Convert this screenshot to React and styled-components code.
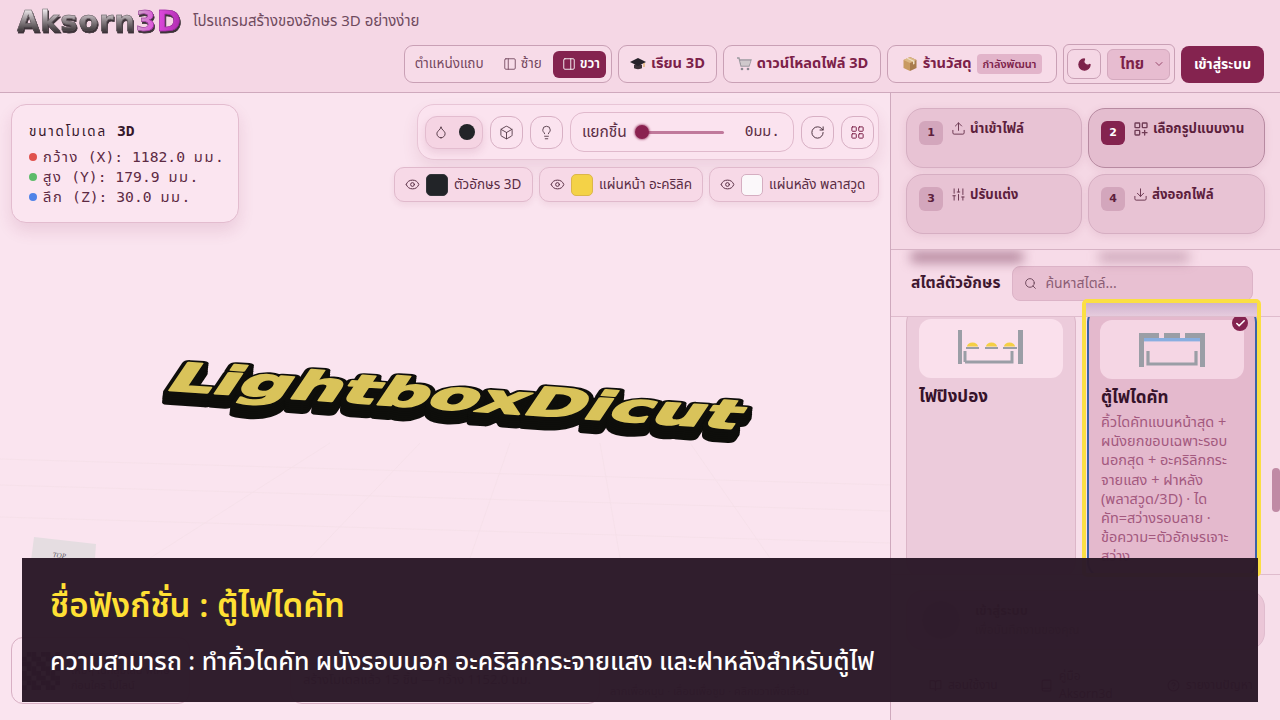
import React from 'react';
import styled, { createGlobalStyle } from 'styled-components';
import {
  PanelLeft, PanelRight, Droplet, Box, Lightbulb, RotateCw, LayoutGrid, Eye,
  Upload, SlidersVertical, Download, Search, Moon, ChevronDown, Check, BookOpen, Book, CircleHelp,
} from 'lucide-react';

const SANS = `"Noto Sans Thai", Kanit, Prompt, "Noto Sans", sans-serif`;
const MONO = `"DejaVu Sans Mono", "Noto Sans Thai", monospace`;
const WINE = '#84234f';
const INK = '#7c2149';
const LINE = '#c9a0b5';

const Global = createGlobalStyle`
  html, body { margin: 0; padding: 0; height: 100%; overflow: hidden; }
  body { font-family: ${SANS}; background: #fae4ef; color: #3a1a2b; }
  * { box-sizing: border-box; }
`;

const Page = styled.div`
  width: 1280px;
  height: 720px;
  display: flex;
  flex-direction: column;
  position: relative;
  overflow: hidden;
`;

/* ---------- header ---------- */
const Header = styled.header`
  height: 93px;
  flex: none;
  background: #f5d7e5;
  border-bottom: 1px solid #cfa9bd;
  padding: 8px 16px 0 17px;
  display: flex;
  flex-direction: column;
  gap: 9px;
`;
const Brand = styled.div`
  display: flex;
  align-items: center;
  gap: 12px;
  height: 27px;
`;
const Logo = styled.div`
  font-family: "DejaVu Sans", sans-serif;
  font-weight: 700;
  font-size: 29px;
  line-height: 27px;
  letter-spacing: 0.8px;
  width: 164px;
  white-space: nowrap;
  filter: drop-shadow(1px 2px 0 #3c3238);
`;
const LogoPart = styled.span`
  background: ${(p) => p.$bg};
  -webkit-background-clip: text;
  background-clip: text;
  color: transparent;
  -webkit-text-stroke: 0.5px ${(p) => p.$edge};
`;
const Tagline = styled.span`
  font-size: 15px;
  color: #6f4a5e;
`;
const Controls = styled.div`
  display: flex;
  justify-content: flex-end;
  align-items: center;
  gap: 6px;
`;
const Group = styled.div`
  height: 38px;
  display: flex;
  align-items: center;
  border: 1px solid ${LINE};
  border-radius: 9px;
  padding: 0 5px 0 10px;
  background: #f7dbe8;
`;
const GroupLabel = styled.span`
  font-size: 13.5px;
  color: #75485f;
  margin-right: 19px;
`;
const SideButton = styled.div`
  height: 27px;
  display: flex;
  align-items: center;
  gap: 4px;
  padding: 0 6px 0 ${(p) => (p.$active ? 9 : 0)}px;
  margin-left: ${(p) => (p.$active ? 5 : 0)}px;
  border-radius: 6px;
  font-size: 13.5px;
  font-weight: ${(p) => (p.$active ? 600 : 400)};
  color: ${(p) => (p.$active ? '#fff' : '#75485f')};
  background: ${(p) => (p.$active ? WINE : 'transparent')};
`;
const NavButton = styled.div`
  height: 38px;
  display: flex;
  align-items: center;
  gap: 5px;
  width: ${(p) => p.$w}px;
  justify-content: center;
  border: 1px solid ${LINE};
  border-radius: 9px;
  background: #f7dbe8;
  font-size: 14.6px;
  font-weight: 700;
  color: ${INK};
  white-space: nowrap;
`;
const SoonTag = styled.span`
  height: 20px;
  padding: 0 6px;
  display: flex;
  align-items: center;
  border-radius: 4px;
  background: #e2b4ca;
  font-size: 11px;
  font-weight: 600;
  color: ${INK};
`;
const ThemeGroup = styled.div`
  width: 112px;
  height: 40px;
  display: flex;
  align-items: center;
  gap: 6px;
  padding: 0 3px;
  border: 1px solid ${LINE};
  border-radius: 6px;
`;
const MoonButton = styled.div`
  width: 34px;
  height: 30px;
  display: flex;
  align-items: center;
  justify-content: center;
  border: 1px solid ${LINE};
  border-radius: 7px;
  color: ${INK};
`;
const LangSelect = styled.div`
  width: 63px;
  height: 31px;
  display: flex;
  align-items: center;
  justify-content: space-between;
  padding: 0 4px 0 12px;
  border: 1px solid #d4a9be;
  border-radius: 6px;
  background: #e7bcd0;
  font-size: 15px;
  font-weight: 700;
  color: ${INK};
`;
const LoginButton = styled.div`
  width: 83px;
  height: 37px;
  display: flex;
  align-items: center;
  justify-content: center;
  border-radius: 8px;
  background: ${WINE};
  color: #fff;
  font-size: 14px;
  font-weight: 700;
`;

/* ---------- main ---------- */
const Main = styled.main`
  flex: 1;
  display: flex;
  min-height: 0;
`;
const Viewport = styled.section`
  width: 890px;
  flex: none;
  position: relative;
  background: #fae4ef;
  overflow: hidden;
`;
const CanvasArt = styled.svg`
  position: absolute;
  inset: 0;
  width: 890px;
  height: 627px;
`;
const SizeCard = styled.div`
  position: absolute;
  left: 11px;
  top: 11px;
  width: 228px;
  height: 119px;
  padding: 16px 17px;
  background: #fbe5f0;
  border: 1px solid #e3bccf;
  border-radius: 15px;
  box-shadow: 0 8px 16px rgba(132, 35, 79, 0.12);
  font-family: ${MONO};
  font-size: 14.7px;
  line-height: 20px;
  color: #5d2a43;
`;
const SizeTitle = styled.div`
  font-size: 13.5px;
  letter-spacing: 1.8px;
  color: #35162a;
  margin-bottom: 6px;
  b { font-weight: 700; font-size: 14.7px; letter-spacing: 0; }
`;
const SizeRow = styled.div`
  display: flex;
  align-items: center;
  gap: 6px;
  white-space: nowrap;
`;
const ThaiRun = styled.span`
  letter-spacing: 1.5px;
`;
const AxisDot = styled.i`
  width: 8px;
  height: 8px;
  flex: none;
  border-radius: 50%;
  background: ${(p) => p.$c};
`;
const ToolStack = styled.div`
  position: absolute;
  right: 11px;
  top: 11px;
  display: flex;
  flex-direction: column;
  align-items: flex-end;
  gap: 7px;
`;
const Toolbar = styled.div`
  width: 462px;
  height: 56px;
  display: flex;
  align-items: center;
  gap: 7px;
  padding: 0 6px 0 7px;
  background: #fbe3ef;
  border: 1px solid #e8c5d6;
  border-radius: 17px;
  box-shadow: 0 8px 16px rgba(132, 35, 79, 0.1);
`;
const RoundTool = styled.div`
  width: ${(p) => p.$w || 33}px;
  height: 33px;
  display: flex;
  align-items: center;
  justify-content: center;
  gap: 11px;
  flex: none;
  border: 1px solid ${(p) => (p.$on ? '#e3bccf' : '#d8b0c4')};
  border-radius: 12px;
  background: ${(p) => (p.$on ? '#f5d4e3' : 'transparent')};
  box-shadow: ${(p) => (p.$on ? '0 4px 8px rgba(132,35,79,.12)' : 'none')};
  color: ${(p) => p.$c || '#4d3340'};
`;
const ColorDot = styled.i`
  width: 16px;
  height: 16px;
  border-radius: 50%;
  background: #222428;
`;
const SliderBox = styled.div`
  width: 224px;
  height: 40px;
  display: flex;
  align-items: center;
  padding: 0 13px 0 11px;
  flex: none;
  border: 1px solid #e0b9cc;
  border-radius: 14px;
  font-size: 15.5px;
  color: #5a2d44;
`;
const Track = styled.div`
  width: 88px;
  height: 3px;
  margin-left: 9px;
  border-radius: 2px;
  background: #c0799b;
  position: relative;
`;
const Thumb = styled.i`
  position: absolute;
  left: -1px;
  top: -6px;
  width: 14px;
  height: 14px;
  border-radius: 50%;
  background: #8a2150;
  box-shadow: 0 0 2px 1px rgba(138, 33, 80, 0.55);
`;
const SliderValue = styled.span`
  margin-left: auto;
  font-family: ${MONO};
  font-size: 14.5px;
`;
const LayerRow = styled.div`
  display: flex;
  gap: 6px;
`;
const LayerChip = styled.div`
  height: 35px;
  display: flex;
  align-items: center;
  padding: 0 10px;
  width: ${(p) => p.$w}px;
  background: #f7d9e7;
  border: 1px solid #e0b9cc;
  border-radius: 10px;
  box-shadow: 0 3px 6px rgba(132, 35, 79, 0.08);
  font-size: 13.5px;
  color: #5a2d44;
  white-space: nowrap;
  svg { color: #5a3046; flex: none; }
`;
const Swatch = styled.i`
  width: 22px;
  height: 22px;
  margin: 0 6px 0 6px;
  border-radius: 5px;
  background: ${(p) => p.$c};
  border: 1px solid ${(p) => p.$b};
  flex: none;
`;
const QrCard = styled.div`
  position: absolute;
  left: 11px;
  top: 544px;
  width: 179px;
  height: 67px;
  display: flex;
  gap: 11px;
  align-items: center;
  padding: 0 10px;
  border: 1px solid #d8b0c4;
  border-radius: 12px;
  background: #fbe5f0;
  font-size: 11px;
  line-height: 15px;
  color: #6d4459;
`;
const QrArt = styled.svg`
  width: 38px;
  height: 38px;
  flex: none;
`;
const CountPill = styled.div`
  position: absolute;
  left: 290px;
  top: 570px;
  width: 310px;
  height: 41px;
  padding: 6px 12px;
  border: 1px solid #d8b0c4;
  border-radius: 12px;
  background: #fbe5f0;
  font-size: 13px;
  color: #6d4459;
  white-space: nowrap;
`;
const HintRow = styled.div`
  position: absolute;
  left: 610px;
  top: 590px;
  font-size: 11px;
  color: #8a6176;
  white-space: nowrap;
`;

/* ---------- side panel ---------- */
const Panel = styled.aside`
  flex: 1;
  position: relative;
  border-left: 1px solid #cfa9bd;
  background: #f7deea;
  display: flex;
  flex-direction: column;
  min-width: 0;
`;
const Steps = styled.div`
  height: 157px;
  flex: none;
  display: grid;
  grid-template-columns: 176px 177px;
  grid-auto-rows: 60px;
  gap: 6px;
  padding: 15px 0 0 15px;
  background: #f5d8e5;
  border-bottom: 1px solid #d6b2c4;
`;
const Step = styled.div`
  display: flex;
  align-items: flex-start;
  padding: 12px 12px;
  border: 1px solid ${(p) => (p.$on ? '#b78aa1' : '#d6aec2')};
  border-radius: 17px;
  background: ${(p) => (p.$on ? '#e4bdcf' : '#e8c3d4')};
  box-shadow: 0 2px 8px rgba(132, 35, 79, 0.1);
  color: #5d1f3d;
  font-size: 13.3px;
  line-height: 16px;
  font-weight: 700;
  white-space: nowrap;
  svg { flex: none; margin: 0 4px 0 0; color: #6f3c55; }
`;
const StepNum = styled.span`
  width: 24px;
  height: 24px;
  margin-right: 8px;
  flex: none;
  display: flex;
  align-items: center;
  justify-content: center;
  border-radius: 6px;
  background: ${(p) => (p.$on ? WINE : '#d3a6bc')};
  color: ${(p) => (p.$on ? '#fff' : '#5d1f3d')};
  font-family: "DejaVu Sans", sans-serif;
  font-size: 11px;
  font-weight: 700;
`;
const StyleHead = styled.div`
  height: 67px;
  flex: none;
  display: flex;
  align-items: center;
  gap: 12px;
  padding: 0 27px 0 20px;
  position: relative;
  background: #f7dbe8;
  border-bottom: 1px solid #dfbccd;
  overflow: hidden;
`;
const StyleTitle = styled.h2`
  margin: 0;
  font-size: 15.5px;
  font-weight: 700;
  color: #3f1830;
  white-space: nowrap;
`;
const Ghost = styled.i`
  position: absolute;
  top: 2px;
  left: ${(p) => p.$x}px;
  width: ${(p) => p.$w}px;
  height: 10px;
  background: rgba(120, 60, 90, ${(p) => p.$a});
  filter: blur(6px);
`;
const SearchBox = styled.div`
  flex: 1;
  height: 35px;
  display: flex;
  align-items: center;
  gap: 8px;
  padding: 0 11px;
  border: 1px solid #dcb3c7;
  border-radius: 8px;
  background: #e8c0d2;
  font-size: 14px;
  color: #8b5d74;
  svg { color: #704a5e; }
`;
const CardScroll = styled.div`
  height: 258px;
  flex: none;
  overflow: hidden;
  border-bottom: 1px solid #dfbccd;
  padding: 0 0 0 15px;
`;
const CardGrid = styled.div`
  display: grid;
  grid-template-columns: 170px 170px;
  gap: 11px;
  margin-top: -11px;
`;
const StyleCard = styled.div`
  height: 272px;
  position: relative;
  padding: 12px;
  border: 1px solid ${(p) => (p.$on ? '#3c62a8' : '#dcb6c8')};
  border-width: ${(p) => (p.$on ? '2px' : '1px')};
  border-radius: 16px;
  background: ${(p) => (p.$on ? '#e4b9cd' : '#eccbdb')};
`;
const Thumbnail = styled.div`
  height: 59px;
  display: flex;
  align-items: center;
  justify-content: center;
  margin: 0 ${(p) => (p.$on ? -1 : 0)}px;
  border-radius: 12px;
  background: ${(p) => (p.$on ? '#f5d6e4' : '#fae0ec')};
`;
const CardTitle = styled.h3`
  margin: 9px 0 6px;
  font-size: 17px;
  line-height: 20px;
  font-weight: 700;
  color: #35122a;
`;
const CardText = styled.p`
  margin: 0;
  font-size: 14.5px;
  line-height: 19.2px;
  color: #a3587e;
`;
const CheckBadge = styled.span`
  position: absolute;
  right: 7px;
  top: 7px;
  width: 16px;
  height: 16px;
  display: flex;
  align-items: center;
  justify-content: center;
  border-radius: 50%;
  background: ${WINE};
  color: #fff;
`;
const Highlight = styled.div`
  position: absolute;
  left: 191px;
  top: 206px;
  width: 179px;
  height: 278px;
  border: 4px solid #fbdf44;
  border-radius: 5px;
  pointer-events: none;
  &::before {
    content: '';
    display: block;
    height: 13px;
    background: linear-gradient(#cfb3cf, #e6cbdd);
  }
`;
const Scrollbar = styled.i`
  position: absolute;
  right: 0;
  top: 375px;
  width: 8px;
  height: 44px;
  border-radius: 4px;
  background: #c08aa5;
`;
const Account = styled.div`
  margin: 15px 15px 0 15px;
  height: 60px;
  display: flex;
  align-items: center;
  gap: 15px;
  padding: 0 15px;
  border: 1px solid #e0bcce;
  border-radius: 17px;
  background: #ebc6d7;
`;
const Avatar = styled.i`
  width: 38px;
  height: 38px;
  border-radius: 50%;
  background: #d3a6bc;
`;
const AccountName = styled.div`
  font-size: 13px;
  font-weight: 700;
  color: #5d1f3d;
`;
const AccountSub = styled.div`
  font-size: 12px;
  color: #9a6a82;
`;
const FootLinks = styled.div`
  flex: 1;
  display: flex;
  align-items: center;
  padding: 0 0 0 38px;
  font-size: 12px;
  line-height: 18px;
  color: #5d1f3d;
`;
const FootLink = styled.span`
  display: flex;
  align-items: center;
  gap: 6px;
  width: ${(p) => p.$w}px;
  flex: none;
  white-space: nowrap;
`;

/* ---------- caption ---------- */
const Caption = styled.div`
  position: absolute;
  left: 22px;
  top: 558px;
  width: 1236px;
  height: 144px;
  padding: 27px 28px 0;
  background: rgba(44, 26, 41, 0.98);
`;
const CaptionTitle = styled.div`
  font-size: 33px;
  line-height: 44px;
  font-weight: 600;
  color: #ffe034;
`;
const CaptionText = styled.div`
  margin-top: 17px;
  font-size: 24.9px;
  line-height: 33px;
  font-weight: 500;
  color: #fff;
`;

/* ---------- drawings ---------- */
const GradCap = () => (
  <svg width="16" height="16" viewBox="0 0 16 16">
    <path d="M8 7l4 2v3c-1 1.5-7 1.5-8 0V9z" fill="#3b3138" />
    <path d="M0 6l8-4 8 4-8 4z" fill="#26222a" />
    <path d="M14 7v4" stroke="#d9a441" strokeWidth="1" />
  </svg>
);
const Cart = () => (
  <svg width="16" height="16" viewBox="0 0 16 16" fill="none">
    <path d="M1 2h2l2 8h8l2-6H4" stroke="#9c9aa0" strokeWidth="1.3" />
    <path d="M4.5 5h10l-1.6 4.5H5.5z" fill="#cfc9cc" />
    <circle cx="6" cy="13" r="1.3" fill="#8a8890" />
    <circle cx="12" cy="13" r="1.3" fill="#8a8890" />
  </svg>
);
const Parcel = () => (
  <svg width="16" height="16" viewBox="0 0 16 16">
    <path d="M8 1l6.5 3v8L8 15z" fill="#a97c4d" />
    <path d="M8 1L1.5 4v8L8 15z" fill="#c89a62" />
    <path d="M1.5 4L8 7l6.5-3L8 1z" fill="#dcb986" />
    <path d="M4.5 2.6L11 5.6v3l1.5-.7V5L6 2z" fill="#efe0c6" />
  </svg>
);
const BlocksPlus = () => (
  <svg width="16" height="16" viewBox="0 0 24 24" fill="none" stroke="currentColor" strokeWidth="2" strokeLinejoin="round" strokeLinecap="round">
    <rect x="3" y="3" width="7" height="7" rx="1" />
    <rect x="14" y="3" width="7" height="7" rx="1" />
    <rect x="3" y="14" width="7" height="7" rx="1" />
    <path d="M17.5 14v7M14 17.5h7" />
  </svg>
);
const PingPongArt = () => (
  <svg width="66" height="38" viewBox="0 0 66 38">
    <path d="M0 0h4v34H0zM60 0h5v34h-5z" fill="#9a9ea6" />
    <path d="M8 18h13M27 18h13M45 18h14" stroke="#9a9ea6" strokeWidth="2" />
    <path d="M7 32V21M7 32h47V21" stroke="#9a9ea6" strokeWidth="3" fill="none" />
    <path d="M9 16.6a5.5 4 0 0 1 11 0zM28 16.6a5.5 4 0 0 1 11 0zM46 16.6a5.5 4 0 0 1 11 0z" fill="#f4cf45" />
  </svg>
);
const DicutArt = () => (
  <svg width="66" height="36" viewBox="0 0 66 36">
    <path d="M0 1h5v34H0zM61 1h5v34h-5z" fill="#9a9ea6" />
    <path d="M5 1h15v5H5zM25 1h16v5H25zM46 1h15v5H46z" fill="#9a9ea6" />
    <rect x="5" y="6" width="56" height="3.4" fill="#88aee0" />
    <path d="M9 19v13h48V19" stroke="#9a9ea6" strokeWidth="3.2" fill="none" />
  </svg>
);

const EXTRUDE = [11, 9, 7, 5, 3, 1];
const HeroText = styled.text`
  font-family: "DejaVu Sans", sans-serif;
  font-weight: 700;
  font-size: 40px;
`;
const qrCells = Array.from({ length: 64 }, (_, i) => i).filter((i) => (i * 7 + (i % 5) * 3) % 3 !== 0);

const GRID_LINES = [
  'M0 366L890 392M0 392L890 418M0 424L890 450',
  'M150 465L330 350M310 465L420 350M470 465L510 350M620 465L600 350M770 465L690 350',
].join('');

const CanvasDrawing = () => (
  <CanvasArt viewBox="0 0 890 627">
    <path d={GRID_LINES} stroke="#f5dfe9" strokeWidth="0.8" fill="none" />
    <g transform="translate(163 297) rotate(3.9) skewX(-30)">
      {EXTRUDE.map((d) => (
        <HeroText key={d} x={d * 0.55} y={d} textLength="572" lengthAdjust="spacingAndGlyphs" fill="#0e0e0b" stroke="#0e0e0b" strokeWidth="7" strokeLinejoin="round">
          LightboxDicut
        </HeroText>
      ))}
      <HeroText x="0" y="0" textLength="572" lengthAdjust="spacingAndGlyphs" fill="#d9c35a" stroke="#d9c35a" strokeWidth="1.6" strokeLinejoin="round">
        LightboxDicut
      </HeroText>
    </g>
    <g>
      <path d="M34 444l62 7-4 60-66-4z" fill="#e5dde1" />
      <text transform="translate(52 464) rotate(6) skewX(-12)" fontFamily='"Liberation Serif", serif' fontSize="7" fill="#59515a">TOP</text>
    </g>
  </CanvasArt>
);

export default function App() {
  return (
    <Page>
      <Global />
      <Header>
        <Brand>
          <Logo>
            <LogoPart $edge="#5d5359" $bg="linear-gradient(#f5f0f3 15%, #8d8589 50%, #2f292c 85%)">Aksorn</LogoPart>
            <LogoPart $edge="#8a2a8c" $bg="linear-gradient(100deg, #c7b6c0, #e04be0 45%, #a827a8)">3D</LogoPart>
          </Logo>
          <Tagline>โปรแกรมสร้างของอักษร 3D อย่างง่าย</Tagline>
        </Brand>
        <Controls>
          <Group>
            <GroupLabel>ตำแหน่งแถบ</GroupLabel>
            <SideButton><PanelLeft size={14} strokeWidth={1.5} />ซ้าย</SideButton>
            <SideButton $active><PanelRight size={14} strokeWidth={1.5} />ขวา</SideButton>
          </Group>
          <NavButton $w={99}><GradCap />เรียน 3D</NavButton>
          <NavButton $w={158}><Cart />ดาวน์โหลดไฟล์ 3D</NavButton>
          <NavButton $w={170}><Parcel />ร้านวัสดุ<SoonTag>กำลังพัฒนา</SoonTag></NavButton>
          <ThemeGroup>
            <MoonButton><Moon size={15} fill={INK} /></MoonButton>
            <LangSelect>ไทย<ChevronDown size={12} strokeWidth={1.5} /></LangSelect>
          </ThemeGroup>
          <LoginButton>เข้าสู่ระบบ</LoginButton>
        </Controls>
      </Header>

      <Main>
        <Viewport>
          <CanvasDrawing />
          <SizeCard>
            <SizeTitle>ขนาดโมเดล <b>3D</b></SizeTitle>
            <SizeRow><AxisDot $c="#e0524d" /><span><ThaiRun>กว้าง</ThaiRun> (X): 1182.0 <ThaiRun>มม.</ThaiRun></span></SizeRow>
            <SizeRow><AxisDot $c="#5dbb6a" /><span><ThaiRun>สูง</ThaiRun> (Y): 179.9 <ThaiRun>มม.</ThaiRun></span></SizeRow>
            <SizeRow><AxisDot $c="#4f83e8" /><span><ThaiRun>ลึก</ThaiRun> (Z): 30.0 <ThaiRun>มม.</ThaiRun></span></SizeRow>
          </SizeCard>
          <ToolStack>
            <Toolbar>
              <RoundTool $w={58} $on><Droplet size={14} strokeWidth={1.6} /><ColorDot /></RoundTool>
              <RoundTool><Box size={15} strokeWidth={1.4} /></RoundTool>
              <RoundTool><Lightbulb size={15} strokeWidth={1.4} /></RoundTool>
              <SliderBox>
                แยกชิ้น
                <Track><Thumb /></Track>
                <SliderValue>0มม.</SliderValue>
              </SliderBox>
              <RoundTool><RotateCw size={15} strokeWidth={1.6} /></RoundTool>
              <RoundTool $c={INK}><LayoutGrid size={15} strokeWidth={1.6} /></RoundTool>
            </Toolbar>
            <LayerRow>
              <LayerChip $w={139}><Eye size={15} strokeWidth={1.6} /><Swatch $c="#222428" $b="#33353a" />ตัวอักษร 3D</LayerChip>
              <LayerChip $w={164}><Eye size={15} strokeWidth={1.6} /><Swatch $c="#f4d247" $b="#dcb64a" />แผ่นหน้า อะคริลิค</LayerChip>
              <LayerChip $w={170}><Eye size={15} strokeWidth={1.6} /><Swatch $c="#fbf8fa" $b="#d5aec1" />แผ่นหลัง พลาสวูด</LayerChip>
            </LayerRow>
          </ToolStack>
          <QrCard>
            <QrArt viewBox="0 0 8 8">
              {qrCells.map((i) => <rect key={i} x={i % 8} y={Math.floor(i / 8)} width="1" height="1" fill="#2c2a2c" />)}
            </QrArt>
            <span>รับการอัพเดทฟังก์ชัน ใหม่ๆ ในกลุ่มไลน์ พิเศษก่อนใคร ไปไลน์</span>
          </QrCard>
          <CountPill>สร้างโมเดลแล้ว 15 ชิ้น — กว้าง 1152.0 มม.</CountPill>
          <HintRow>ลากเพื่อหมุน · เลื่อนเพื่อซูม · คลิกขวาเพื่อเลื่อน</HintRow>
        </Viewport>

        <Panel>
          <Steps>
            <Step><StepNum>1</StepNum><Upload size={15} strokeWidth={1.6} />นำเข้าไฟล์</Step>
            <Step $on><StepNum $on>2</StepNum><BlocksPlus />เลือกรูปแบบงาน</Step>
            <Step><StepNum>3</StepNum><SlidersVertical size={15} strokeWidth={1.6} />ปรับแต่ง</Step>
            <Step><StepNum>4</StepNum><Download size={15} strokeWidth={1.6} />ส่งออกไฟล์</Step>
          </Steps>
          <StyleHead>
            <Ghost $x={20} $w={112} $a={0.6} />
            <Ghost $x={208} $w={90} $a={0.35} />
            <StyleTitle>สไตล์ตัวอักษร</StyleTitle>
            <SearchBox><Search size={13} strokeWidth={1.8} />ค้นหาสไตล์...</SearchBox>
          </StyleHead>
          <CardScroll>
            <CardGrid>
              <StyleCard>
                <Thumbnail><PingPongArt /></Thumbnail>
                <CardTitle>ไฟปิงปอง</CardTitle>
              </StyleCard>
              <StyleCard $on>
                <CheckBadge><Check size={11} strokeWidth={3.5} /></CheckBadge>
                <Thumbnail $on><DicutArt /></Thumbnail>
                <CardTitle>ตู้ไฟไดคัท</CardTitle>
                <CardText>
                  คิ้วไดคัทแบนหน้าสุด + ผนังยกขอบเฉพาะรอบนอกสุด + อะคริลิกกระจายแสง + ฝาหลัง (พลาสวูด/3D) · ไดคัท=สว่างรอบลาย · ข้อความ=ตัวอักษรเจาะสว่าง
                </CardText>
              </StyleCard>
            </CardGrid>
          </CardScroll>
          <Account>
            <Avatar />
            <div>
              <AccountName>เข้าสู่ระบบ</AccountName>
              <AccountSub>เพื่อบันทึกงานของคุณ</AccountSub>
            </div>
          </Account>
          <FootLinks>
            <FootLink $w={111}><BookOpen size={13} />สอนใช้งาน</FootLink>
            <FootLink $w={127}><Book size={13} /><span>คู่มือ<br />Aksorn3d</span></FootLink>
            <FootLink $w={90}><CircleHelp size={13} />รายงานปัญหา</FootLink>
          </FootLinks>
          <Highlight />
          <Scrollbar />
        </Panel>
      </Main>

      <Caption>
        <CaptionTitle>ชื่อฟังก์ชั่น : ตู้ไฟไดคัท</CaptionTitle>
        <CaptionText>ความสามารถ : ทำคิ้วไดคัท ผนังรอบนอก อะคริลิกกระจายแสง และฝาหลังสำหรับตู้ไฟ</CaptionText>
      </Caption>
    </Page>
  );
}
